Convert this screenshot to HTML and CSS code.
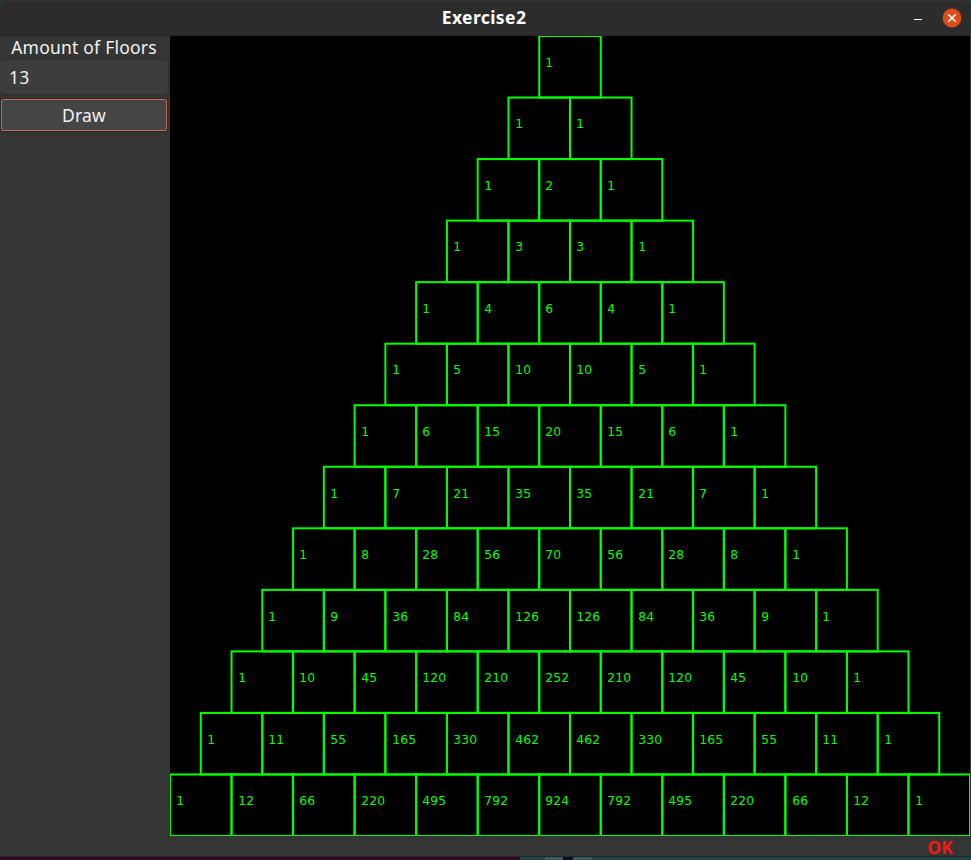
FILE: index.html
```html
<!DOCTYPE html>
<html lang="en">
<head>
<meta charset="utf-8">
<title>Exercise2</title>
<link rel="stylesheet" href="styles.css">
</head>
<body>
<div class="window">
  <header class="titlebar">
    <span class="spacer"></span>
    <h1 class="title"><span>Exercise2</span></h1>
    <div class="controls">
      <svg class="minimize" width="8" height="2" viewBox="0 0 8 2"><path d="M0 .5h8" stroke="#fff"/></svg>
      <svg class="close" width="20" height="20" viewBox="0 0 20 20"><circle cx="10" cy="10" r="9.4" fill="#e04b1a"/><path d="M6.3 6.3l7.4 7.4M13.7 6.3l-7.4 7.4" stroke="#fff" stroke-width="1.6"/></svg>
    </div>
  </header>
  <main class="content">
    <aside class="sidebar">
      <div class="label"><span>Amount of Floors</span></div>
      <div class="entry"><span>13</span></div>
      <button class="draw"><span>Draw</span></button>
    </aside>
    <svg class="canvas" id="canvas" width="800" height="800" viewBox="0 0 800 800"></svg>
  </main>
  <footer class="status"><span>OK</span></footer>
</div>
<div class="desktop"></div>
<script src="script.js"></script>
</body>
</html>
```
FILE: styles.css
```css
* { box-sizing: border-box; }
body {
  margin: 0;
  width: 971px;
  height: 860px;
  overflow: hidden;
  background: #1e3c40;
  font-family: "Noto Sans", sans-serif;
  color: #f2f1ef;
}
.window {
  width: 970px;
  height: 857px;
  background: #353535;
  border-radius: 5px 5px 0 0;
}
.titlebar {
  display: grid;
  grid-template-columns: 70px 1fr 70px;
  align-items: center;
  height: 36px;
  background: #2c2c2c;
  border-top: 1px solid #343434;
  border-bottom: 1px solid #242424;
  border-radius: 5px 5px 0 0;
}
.title {
  margin: 0;
  padding: 0 2px 2px 0;
  font-size: 17.5px;
  letter-spacing: 0.4px;
  font-weight: 700;
  line-height: 32px;
  text-align: center;
  color: #fff;
}
.controls {
  display: flex;
  align-items: center;
  justify-content: flex-end;
  gap: 20px;
  padding-right: 8px;
}
.minimize { margin-top: 4px; }
.content { display: flex; height: 800px; }
.sidebar {
  display: flex;
  flex-direction: column;
  width: 170px;
  font-size: 17.5px;
  letter-spacing: 0.22px;
}
.label {
  height: 23px;
  line-height: 23px;
  text-align: center;
  padding-right: 2px;
  white-space: nowrap;
}
.entry {
  height: 36px;
  width: 169px;
  padding-left: 9px;
  line-height: 35px;
  background: #3d3d3d;
  border: 1px solid #2e2e2e;
  border-left: 0;
  border-radius: 5px;
}
.draw {
  width: 166px;
  height: 32px;
  margin: 4px 0 0 1px;
  padding: 0;
  font: inherit;
  letter-spacing: inherit;
  line-height: 30px;
  color: inherit;
  background: #454545;
  border: 1px solid #bf6c50;
  border-radius: 2px;
  box-shadow: 0 0 0 1px #2c2c2c;
}
.canvas { display: block; background: #000; }
.cell { fill: none; stroke: #0f0; stroke-width: 2; }
.number {
  fill: #0f0;
  font-family: "DejaVu Sans", sans-serif;
  font-size: 12.3px;
  letter-spacing: 0.17px;
}
.status {
  height: 21px;
  padding-right: 17px;
  font-family: "Noto Sans", sans-serif;
  font-size: 17.7px;
  font-weight: 700;
  line-height: 22px;
  text-align: right;
  color: #ff1414;
  border-bottom: 1px solid #242424;
}
.desktop {
  height: 3px;
  background: linear-gradient(90deg, #2c0a20 0 520px, #24484a 520px 545px, #3c5c5c 545px 563px, #0a1028 563px 573px, #365858 573px 592px, #214345 592px);
}
```
FILE: script.js
```js
const NS = "http://www.w3.org/2000/svg";
const canvas = document.getElementById("canvas");
const floors = 13;
const size = 800 / floors;

function add(name, attributes, text) {
  const node = document.createElementNS(NS, name);
  for (const key in attributes) node.setAttribute(key, attributes[key]);
  if (text !== undefined) node.textContent = text;
  canvas.appendChild(node);
}

for (let row = 0; row < floors; row++) {
  let value = 1;
  for (let col = 0; col <= row; col++) {
    const x = (floors - 1 - row) * size / 2 + col * size;
    const y = row * size;
    add("rect", { class: "cell", x, y, width: size, height: size });
    add("text", { class: "number", x: Math.round(x + size / 10) + 0.2, y: Math.round(y + size / 2) }, value);
    value = value * (row - col) / (col + 1);
  }
}
```
